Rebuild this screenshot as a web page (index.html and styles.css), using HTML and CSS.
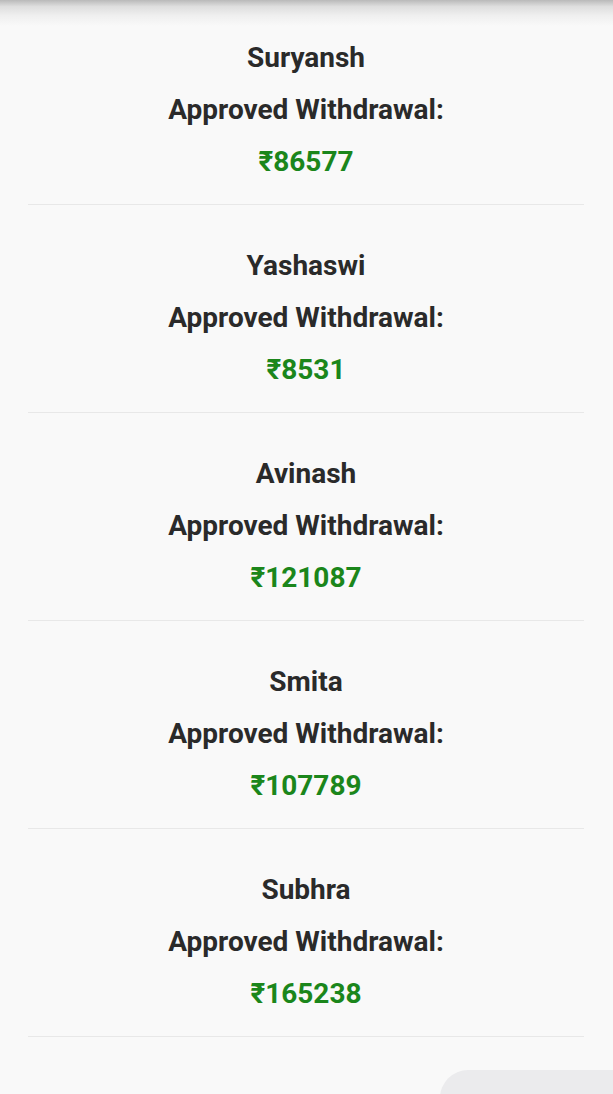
FILE: index.html
```html
<!DOCTYPE html>
<html>
<head>
<meta charset="utf-8">
<link rel="stylesheet" href="styles.css">
</head>
<body>
<div class="topshade"></div>
<ul class="list">
  <li class="item">
    <div class="name">Suryansh</div>
    <div class="label">Approved Withdrawal:</div>
    <div class="amount">₹86577</div>
  </li>
  <li class="item">
    <div class="name">Yashaswi</div>
    <div class="label">Approved Withdrawal:</div>
    <div class="amount">₹8531</div>
  </li>
  <li class="item">
    <div class="name">Avinash</div>
    <div class="label">Approved Withdrawal:</div>
    <div class="amount">₹121087</div>
  </li>
  <li class="item">
    <div class="name">Smita</div>
    <div class="label">Approved Withdrawal:</div>
    <div class="amount">₹107789</div>
  </li>
  <li class="item">
    <div class="name">Subhra</div>
    <div class="label">Approved Withdrawal:</div>
    <div class="amount">₹165238</div>
  </li>
</ul>
<div class="corner"></div>
</body>
</html>
```
FILE: styles.css
```css
html, body {
  margin: 0;
  padding: 0;
  background: #f9f9f9;
  height: 100%;
  overflow: hidden;
}
body {
  font-family: Roboto, "Liberation Sans", sans-serif;
  position: relative;
}
.topshade {
  position: absolute;
  top: 0;
  left: 0;
  right: 0;
  height: 26px;
  background: linear-gradient(to bottom, #b9b9b9 0%, #dedede 25%, #efefef 60%, #f9f9f9 100%);
}
.list {
  list-style: none;
  margin: 0;
  padding: 0 29px 0 28px;
}
.item {
  padding: 35px 0 16px;
  border-bottom: 1px solid #e8e8e8;
  text-align: center;
  font-weight: 700;
  font-size: 28px;
  line-height: 52px;
}
.item:first-child {
  padding-top: 32px;
}
.name, .label {
  color: #2a2a2a;
}
.amount {
  color: #1b861b;
}
.corner {
  position: absolute;
  left: 440px;
  top: 1070px;
  width: 200px;
  height: 60px;
  background: #ebebed;
  border-top-left-radius: 28px;
}
```
